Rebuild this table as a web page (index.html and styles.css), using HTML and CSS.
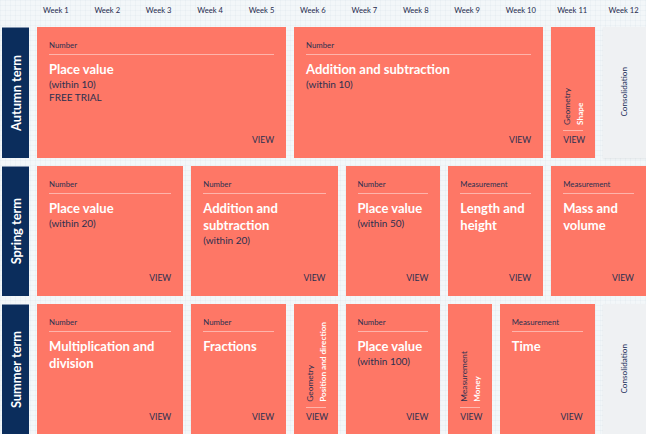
FILE: index.html
```html
<!DOCTYPE html>
<html lang="en">
<head>
<meta charset="utf-8">
<title>Scheme of learning</title>
<link rel="stylesheet" href="styles.css">
</head>
<body>
<div class="planner">
  <div class="corner"></div>
  <div class="week">Week 1</div>
  <div class="week">Week 2</div>
  <div class="week">Week 3</div>
  <div class="week">Week 4</div>
  <div class="week">Week 5</div>
  <div class="week">Week 6</div>
  <div class="week">Week 7</div>
  <div class="week">Week 8</div>
  <div class="week">Week 9</div>
  <div class="week">Week 10</div>
  <div class="week">Week 11</div>
  <div class="week">Week 12</div>

  <div class="term"><span>Autumn term</span></div>
  <div class="card span5">
    <div class="cat">Number</div>
    <div class="title">Place value</div>
    <div class="sub">(within 10)<br>FREE TRIAL</div>
    <div class="view">VIEW</div>
  </div>
  <div class="card span5">
    <div class="cat">Number</div>
    <div class="title">Addition and subtraction</div>
    <div class="sub">(within 10)</div>
    <div class="view">VIEW</div>
  </div>
  <div class="card narrow">
    <div class="vtext"><span class="vcat">Geometry</span><span class="vtitle">Shape</span></div>
    <div class="view">VIEW</div>
  </div>
  <div class="consol"><span>Consolidation</span></div>

  <div class="term"><span>Spring term</span></div>
  <div class="card span3">
    <div class="cat">Number</div>
    <div class="title">Place value</div>
    <div class="sub">(within 20)</div>
    <div class="view">VIEW</div>
  </div>
  <div class="card span3">
    <div class="cat">Number</div>
    <div class="title">Addition and subtraction</div>
    <div class="sub">(within 20)</div>
    <div class="view">VIEW</div>
  </div>
  <div class="card span2">
    <div class="cat">Number</div>
    <div class="title">Place value</div>
    <div class="sub">(within 50)</div>
    <div class="view">VIEW</div>
  </div>
  <div class="card span2">
    <div class="cat">Measurement</div>
    <div class="title">Length and height</div>
    <div class="view">VIEW</div>
  </div>
  <div class="card span2">
    <div class="cat">Measurement</div>
    <div class="title">Mass and volume</div>
    <div class="view">VIEW</div>
  </div>

  <div class="term"><span>Summer term</span></div>
  <div class="card span3">
    <div class="cat">Number</div>
    <div class="title">Multiplication and division</div>
    <div class="view">VIEW</div>
  </div>
  <div class="card span2">
    <div class="cat">Number</div>
    <div class="title">Fractions</div>
    <div class="view">VIEW</div>
  </div>
  <div class="card narrow">
    <div class="vtext"><span class="vcat">Geometry</span><span class="vtitle">Position and direction</span></div>
    <div class="view">VIEW</div>
  </div>
  <div class="card span2">
    <div class="cat">Number</div>
    <div class="title">Place value</div>
    <div class="sub">(within 100)</div>
    <div class="view">VIEW</div>
  </div>
  <div class="card narrow">
    <div class="vtext"><span class="vcat">Measurement</span><span class="vtitle">Money</span></div>
    <div class="view">VIEW</div>
  </div>
  <div class="card span2">
    <div class="cat">Measurement</div>
    <div class="title">Time</div>
    <div class="view">VIEW</div>
  </div>
  <div class="consol"><span>Consolidation</span></div>
</div>
</body>
</html>
```

FILE: styles.css
```css
html, body {
  margin: 0;
  padding: 0;
}
body {
  width: 646px;
  height: 434px;
  overflow: hidden;
  background-color: #f3f7f9;
  background-image:
    linear-gradient(to right, rgba(210, 222, 230, 0.18) 1px, transparent 1px),
    linear-gradient(to bottom, rgba(210, 222, 230, 0.18) 1px, transparent 1px);
  background-size: 5px 5px;
  font-family: Lato, "Open Sans", sans-serif;
  color: #27304f;
}
.planner {
  display: grid;
  grid-template-columns: 27px repeat(12, 1fr);
  grid-template-rows: 19px repeat(3, 130.5px);
  column-gap: 8px;
  row-gap: 8px;
  padding-left: 2px;
  width: 644px;
}
.week {
  font-size: 7.6px;
  line-height: 19px;
  padding-top: 1px;
  padding-left: 6px;
  white-space: nowrap;
  color: #1f2a4d;
}
.term {
  background: #0b2d5c;
  border-top: 1px solid #8193ad;
  display: flex;
  align-items: center;
  justify-content: center;
}
.term span {
  writing-mode: vertical-rl;
  transform: rotate(180deg);
  color: #ffffff;
  font-weight: 700;
  font-size: 12.8px;
  white-space: nowrap;
}
.card {
  background: #fe7766;
  display: flex;
  flex-direction: column;
  padding: 13px 12px 13px 12px;
  box-sizing: border-box;
  min-width: 0;
}
.span2 { grid-column: span 2; }
.span3 { grid-column: span 3; }
.span5 { grid-column: span 5; }
.cat {
  font-size: 7.8px;
  line-height: 10px;
  padding-bottom: 4px;
  border-bottom: 1px solid rgba(255, 255, 255, 0.45);
  color: #2b3050;
}
.title {
  margin-top: 6px;
  font-size: 13px;
  line-height: 17px;
  font-weight: 700;
  color: #ffffff;
}
.sub {
  font-size: 10px;
  line-height: 12.6px;
  color: #2b3050;
}
.view {
  margin-top: auto;
  text-align: right;
  font-size: 8.6px;
  line-height: 10px;
  color: #2b3050;
}
.narrow {
  justify-content: flex-end;
  padding: 13px 12px 13px 12px;
}
.vtext {
  writing-mode: vertical-rl;
  transform: rotate(180deg);
  display: flex;
  flex-direction: column;
  margin-left: -2px;
  margin-bottom: 5px;
  white-space: nowrap;
}
.vcat {
  font-size: 8.4px;
  line-height: 12.5px;
  color: #2b3050;
}
.vtitle {
  font-size: 8.2px;
  line-height: 12.5px;
  font-weight: 700;
  color: #ffffff;
}
.narrow .view {
  margin-top: 0;
  border-top: 1px solid rgba(255, 255, 255, 0.45);
  padding-top: 4px;
  text-align: center;
}
.consol {
  background: #eff1f3;
  box-shadow: 0 1px 2px rgba(0, 0, 0, 0.08);
  display: flex;
  align-items: center;
  justify-content: center;
}
.consol span {
  writing-mode: vertical-rl;
  transform: rotate(180deg);
  font-size: 8.2px;
  color: #22305a;
}
```
